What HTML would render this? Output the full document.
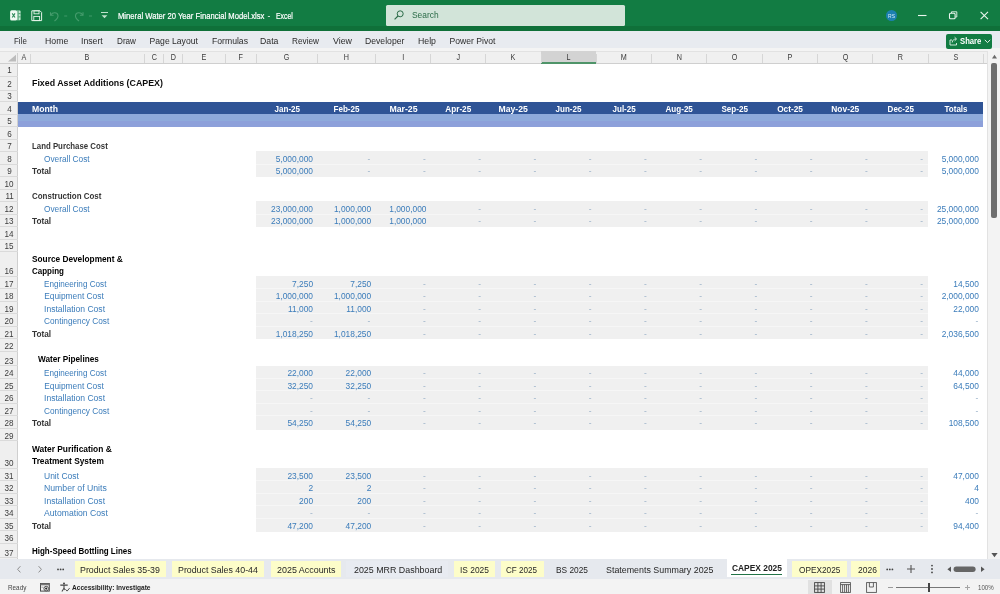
<!DOCTYPE html>
<html lang="en"><head><meta charset="utf-8"><title>Mineral Water 20 Year Financial Model.xlsx - Excel</title>
<style>html,body{margin:0;padding:0;background:#fff}
body{width:1000px;height:594px;overflow:hidden;position:relative;font-family:"Liberation Sans",sans-serif}
#app{position:absolute;left:0;top:0;width:1000px;height:594px;overflow:hidden;will-change:transform}
#app div,#app span,#app svg{position:absolute;display:block}
#app span{white-space:pre}</style></head>
<body><div id="app">
<div style="left:0.00px;top:0.00px;width:1000.00px;height:30.60px;background:#127c43;"></div>
<div style="left:0.00px;top:25.80px;width:1000.00px;height:4.80px;background:#0f7039;"></div>
<div style="left:385.70px;top:5.40px;width:239.20px;height:20.30px;background:#d2e4d9;border-radius:1.5px;"></div>
<span style="left:412.40px;transform-origin:0 50%;top:10.01px;font-size:8.6px;line-height:11.18px;color:#2a6b47;transform:scaleX(0.9762);">Search</span>
<svg style="left:393px;top:8.7px" width="12" height="12" viewBox="0 0 12 12"><circle cx="7.2" cy="4.8" r="3" fill="none" stroke="#2a6b47" stroke-width="1"/><path d="M5 7 L1.6 10.4" stroke="#2a6b47" stroke-width="1.1" fill="none"/></svg>
<span style="left:117.60px;transform-origin:0 50%;top:10.88px;font-size:8.5px;line-height:11.05px;color:#fff;transform:scaleX(0.9000);-webkit-text-stroke:0.2px #fff;">Mineral Water 20 Year Financial Model.xlsx</span>
<span style="left:267.50px;transform-origin:0 50%;top:10.88px;font-size:8.5px;line-height:11.05px;color:#fff;">-</span>
<span style="left:275.60px;transform-origin:0 50%;top:10.88px;font-size:8.5px;line-height:11.05px;color:#fff;transform:scaleX(0.8083);-webkit-text-stroke:0.2px #fff;">Excel</span>
<svg style="left:10px;top:10px" width="11" height="11" viewBox="0 0 11 11"><rect x="6.4" y="0.6" width="4.2" height="9.6" rx="0.8" fill="#c4e8d2"/><rect x="7.6" y="0.6" width="0.9" height="9.6" fill="#2f8d5a"/><rect x="8.5" y="3.3" width="2.1" height="0.8" fill="#2f8d5a"/><rect x="8.5" y="6.5" width="2.1" height="0.8" fill="#2f8d5a"/><rect x="0.1" y="0.3" width="7" height="10.2" rx="1.6" fill="#f0faf3"/><path d="M2.2 3.4 L5 7.5 M5 3.4 L2.2 7.5" stroke="#2b8757" stroke-width="1.1" fill="none"/></svg>
<svg style="left:31px;top:10px" width="12" height="12" viewBox="0 0 12 12"><path d="M0.8 0.8 H9 L10.6 2.4 V10.6 H0.8 Z" fill="none" stroke="#e6f3ea" stroke-width="1"/><rect x="3" y="0.8" width="5" height="3" fill="none" stroke="#e6f3ea" stroke-width="0.9"/><rect x="2.8" y="6.4" width="5.8" height="4.2" fill="none" stroke="#e6f3ea" stroke-width="0.9"/></svg>
<svg style="left:49px;top:9px" width="46" height="14" viewBox="0 0 46 14"><g fill="none" stroke="#469c6d" stroke-width="1.1"><path d="M1.5 3.2 V6.2 H4.6"/><path d="M1.8 6 C3.5 3 8.5 3 9 6.5 C9.3 9 7.5 10.5 5.5 12"/><path d="M15.2 7 H18.2" stroke-width="0.9"/><path d="M34 3.2 V6.2 H30.9"/><path d="M33.7 6 C32 3 27 3 26.5 6.5 C26.2 9 28 10.5 30 12"/><path d="M40 7 H43" stroke-width="0.9"/></g></svg>
<svg style="left:100px;top:11px" width="9" height="9" viewBox="0 0 9 9"><path d="M1 1.5 H8" stroke="#bfe3cd" stroke-width="1"/><path d="M1.6 4.2 L4.5 7.2 L7.4 4.2 Z" fill="#bfe3cd"/></svg>
<div style="left:885.6px;top:9.5px;width:11.8px;height:11.8px;border-radius:50%;background:#1c80b0"></div>
<span style="left:888.03px;transform-origin:50% 50%;top:12.75px;font-size:5px;line-height:6.50px;color:#d8eef8;">RS</span>
<svg style="left:915px;top:9px" width="80" height="14" viewBox="0 0 80 14"><g fill="none" stroke="#eaf6ee" stroke-width="1.1"><path d="M3 6.5 H11.5"/><rect x="34.5" y="4.2" width="5.6" height="5.6" rx="1"/><path d="M36.5 4 V2.8 H41.8 V8 H40.4" stroke-width="0.9"/><path d="M65.6 2.8 L73 10.2 M73 2.8 L65.6 10.2"/></g></svg>
<div style="left:0.00px;top:30.60px;width:1000.00px;height:17.40px;background:#e8ebf0;"></div>
<div style="left:0.00px;top:48.20px;width:1000.00px;height:3.00px;background:#f4f4f4;"></div>
<span style="left:13.60px;transform-origin:0 50%;top:36.01px;font-size:8.6px;line-height:11.18px;color:#2b2b2b;transform:scaleX(0.9237);">File</span>
<span style="left:44.70px;transform-origin:0 50%;top:36.01px;font-size:8.6px;line-height:11.18px;color:#2b2b2b;transform:scaleX(1.0157);">Home</span>
<span style="left:81.10px;transform-origin:0 50%;top:36.01px;font-size:8.6px;line-height:11.18px;color:#2b2b2b;transform:scaleX(1.0136);">Insert</span>
<span style="left:117.00px;transform-origin:0 50%;top:36.01px;font-size:8.6px;line-height:11.18px;color:#2b2b2b;transform:scaleX(0.9468);">Draw</span>
<span style="left:149.60px;transform-origin:0 50%;top:36.01px;font-size:8.6px;line-height:11.18px;color:#2b2b2b;">Page Layout</span>
<span style="left:211.60px;transform-origin:0 50%;top:36.01px;font-size:8.6px;line-height:11.18px;color:#2b2b2b;transform:scaleX(1.0044);">Formulas</span>
<span style="left:260.00px;transform-origin:0 50%;top:36.01px;font-size:8.6px;line-height:11.18px;color:#2b2b2b;transform:scaleX(1.0129);">Data</span>
<span style="left:292.40px;transform-origin:0 50%;top:36.01px;font-size:8.6px;line-height:11.18px;color:#2b2b2b;transform:scaleX(0.9575);">Review</span>
<span style="left:333.00px;transform-origin:0 50%;top:36.01px;font-size:8.6px;line-height:11.18px;color:#2b2b2b;transform:scaleX(1.0279);">View</span>
<span style="left:365.00px;transform-origin:0 50%;top:36.01px;font-size:8.6px;line-height:11.18px;color:#2b2b2b;transform:scaleX(1.0051);">Developer</span>
<span style="left:418.00px;transform-origin:0 50%;top:36.01px;font-size:8.6px;line-height:11.18px;color:#2b2b2b;transform:scaleX(1.0177);">Help</span>
<span style="left:449.60px;transform-origin:0 50%;top:36.01px;font-size:8.6px;line-height:11.18px;color:#2b2b2b;">Power Pivot</span>
<div style="left:946.00px;top:33.60px;width:46.40px;height:15.20px;background:#127c43;border-radius:2px;"></div>
<span style="left:959.80px;transform-origin:0 50%;top:36.01px;font-size:8.6px;line-height:11.18px;color:#fff;font-weight:700;transform:scaleX(0.8953);">Share</span>
<svg style="left:948.5px;top:36px" width="10" height="10" viewBox="0 0 10 10"><g fill="none" stroke="#dff0e5" stroke-width="0.9"><path d="M3 4 H1 V9 H7.5 V7"/><path d="M3.2 6.5 C3.4 4 5 3 7 3 M5.6 1.2 L7.6 3 L5.6 4.9"/></g></svg>
<svg style="left:984px;top:39px" width="7" height="5" viewBox="0 0 7 5"><path d="M0.8 0.8 L3.5 3.6 L6.2 0.8" fill="none" stroke="#dff0e5" stroke-width="1"/></svg>
<div style="left:0.00px;top:51.20px;width:1000.00px;height:508.00px;background:#fff;"></div>
<div style="left:0.00px;top:51.00px;width:987.50px;height:12.50px;background:#f0f0f0;"></div>
<div style="left:0.00px;top:50.70px;width:987.50px;height:0.80px;background:#e2e2e2;"></div>
<div style="left:0.00px;top:62.90px;width:987.50px;height:0.80px;background:#cfcfcf;"></div>
<svg style="left:7px;top:54px" width="10" height="8" viewBox="0 0 10 8"><path d="M9 0.8 V7.6 H1 Z" fill="#bcbcbc"/></svg>
<div style="left:541.04px;top:51.00px;width:55.27px;height:12.50px;background:#d3d3d3;"></div>
<div style="left:541.04px;top:62.00px;width:55.27px;height:1.50px;background:#4f9469;"></div>
<div style="left:29.60px;top:53.50px;width:0.80px;height:9.50px;background:#d6d6d6;"></div>
<span style="left:20.70px;transform-origin:50% 50%;top:52.15px;font-size:9.0px;line-height:11.70px;color:#3a3a3a;transform:scaleX(0.8000);">A</span>
<div style="left:144.00px;top:53.50px;width:0.80px;height:9.50px;background:#d6d6d6;"></div>
<span style="left:84.20px;transform-origin:50% 50%;top:52.15px;font-size:9.0px;line-height:11.70px;color:#3a3a3a;transform:scaleX(0.8000);">B</span>
<div style="left:163.20px;top:53.50px;width:0.80px;height:9.50px;background:#d6d6d6;"></div>
<span style="left:150.75px;transform-origin:50% 50%;top:52.15px;font-size:9.0px;line-height:11.70px;color:#3a3a3a;transform:scaleX(0.8000);">C</span>
<div style="left:181.60px;top:53.50px;width:0.80px;height:9.50px;background:#d6d6d6;"></div>
<span style="left:169.55px;transform-origin:50% 50%;top:52.15px;font-size:9.0px;line-height:11.70px;color:#3a3a3a;transform:scaleX(0.8000);">D</span>
<div style="left:225.20px;top:53.50px;width:0.80px;height:9.50px;background:#d6d6d6;"></div>
<span style="left:200.80px;transform-origin:50% 50%;top:52.15px;font-size:9.0px;line-height:11.70px;color:#3a3a3a;transform:scaleX(0.8000);">E</span>
<div style="left:255.60px;top:53.50px;width:0.80px;height:9.50px;background:#d6d6d6;"></div>
<span style="left:238.05px;transform-origin:50% 50%;top:52.15px;font-size:9.0px;line-height:11.70px;color:#3a3a3a;transform:scaleX(0.8000);">F</span>
<div style="left:317.20px;top:53.50px;width:0.80px;height:9.50px;background:#d6d6d6;"></div>
<span style="left:283.30px;transform-origin:50% 50%;top:52.15px;font-size:9.0px;line-height:11.70px;color:#3a3a3a;transform:scaleX(0.8000);">G</span>
<div style="left:374.80px;top:53.50px;width:0.80px;height:9.50px;background:#d6d6d6;"></div>
<span style="left:343.15px;transform-origin:50% 50%;top:52.15px;font-size:9.0px;line-height:11.70px;color:#3a3a3a;transform:scaleX(0.8000);">H</span>
<div style="left:430.10px;top:53.50px;width:0.80px;height:9.50px;background:#d6d6d6;"></div>
<span style="left:401.60px;transform-origin:50% 50%;top:52.15px;font-size:9.0px;line-height:11.70px;color:#3a3a3a;transform:scaleX(0.8000);">I</span>
<div style="left:485.37px;top:53.50px;width:0.80px;height:9.50px;background:#d6d6d6;"></div>
<span style="left:455.88px;transform-origin:50% 50%;top:52.15px;font-size:9.0px;line-height:11.70px;color:#3a3a3a;transform:scaleX(0.8000);">J</span>
<div style="left:540.64px;top:53.50px;width:0.80px;height:9.50px;background:#d6d6d6;"></div>
<span style="left:510.40px;transform-origin:50% 50%;top:52.15px;font-size:9.0px;line-height:11.70px;color:#3a3a3a;transform:scaleX(0.8000);">K</span>
<div style="left:595.91px;top:53.50px;width:0.80px;height:9.50px;background:#d6d6d6;"></div>
<span style="left:566.17px;transform-origin:50% 50%;top:52.15px;font-size:9.0px;line-height:11.70px;color:#3a3a3a;transform:scaleX(0.8000);">L</span>
<div style="left:651.18px;top:53.50px;width:0.80px;height:9.50px;background:#d6d6d6;"></div>
<span style="left:620.20px;transform-origin:50% 50%;top:52.15px;font-size:9.0px;line-height:11.70px;color:#3a3a3a;transform:scaleX(0.8000);">M</span>
<div style="left:706.45px;top:53.50px;width:0.80px;height:9.50px;background:#d6d6d6;"></div>
<span style="left:675.97px;transform-origin:50% 50%;top:52.15px;font-size:9.0px;line-height:11.70px;color:#3a3a3a;transform:scaleX(0.8000);">N</span>
<div style="left:761.72px;top:53.50px;width:0.80px;height:9.50px;background:#d6d6d6;"></div>
<span style="left:730.98px;transform-origin:50% 50%;top:52.15px;font-size:9.0px;line-height:11.70px;color:#3a3a3a;transform:scaleX(0.8000);">O</span>
<div style="left:816.99px;top:53.50px;width:0.80px;height:9.50px;background:#d6d6d6;"></div>
<span style="left:786.75px;transform-origin:50% 50%;top:52.15px;font-size:9.0px;line-height:11.70px;color:#3a3a3a;transform:scaleX(0.8000);">P</span>
<div style="left:872.26px;top:53.50px;width:0.80px;height:9.50px;background:#d6d6d6;"></div>
<span style="left:841.52px;transform-origin:50% 50%;top:52.15px;font-size:9.0px;line-height:11.70px;color:#3a3a3a;transform:scaleX(0.8000);">Q</span>
<div style="left:927.53px;top:53.50px;width:0.80px;height:9.50px;background:#d6d6d6;"></div>
<span style="left:897.05px;transform-origin:50% 50%;top:52.15px;font-size:9.0px;line-height:11.70px;color:#3a3a3a;transform:scaleX(0.8000);">R</span>
<div style="left:982.80px;top:53.50px;width:0.80px;height:9.50px;background:#d6d6d6;"></div>
<span style="left:952.56px;transform-origin:50% 50%;top:52.15px;font-size:9.0px;line-height:11.70px;color:#3a3a3a;transform:scaleX(0.8000);">S</span>
<div style="left:17.00px;top:52.50px;width:0.80px;height:10.50px;background:#d0d0d0;"></div>
<div style="left:0.00px;top:63.50px;width:17.60px;height:495.50px;background:#efefef;"></div>
<div style="left:17.00px;top:63.50px;width:0.80px;height:495.50px;background:#cfcfcf;"></div>
<div style="left:0.00px;top:75.60px;width:17.80px;height:0.80px;background:#dadada;"></div>
<span style="left:6.70px;transform-origin:50% 50%;top:65.15px;font-size:9.0px;line-height:11.70px;color:#3c3c3c;transform:scaleX(0.9000);">1</span>
<div style="left:0.00px;top:89.60px;width:17.80px;height:0.80px;background:#dadada;"></div>
<span style="left:6.70px;transform-origin:50% 50%;top:78.85px;font-size:9.0px;line-height:11.70px;color:#3c3c3c;transform:scaleX(0.9000);">2</span>
<div style="left:0.00px;top:101.00px;width:17.80px;height:0.80px;background:#dadada;"></div>
<span style="left:6.70px;transform-origin:50% 50%;top:91.05px;font-size:9.0px;line-height:11.70px;color:#3c3c3c;transform:scaleX(0.9000);">3</span>
<div style="left:0.00px;top:113.50px;width:17.80px;height:0.80px;background:#dadada;"></div>
<span style="left:6.70px;transform-origin:50% 50%;top:103.95px;font-size:9.0px;line-height:11.70px;color:#3c3c3c;transform:scaleX(0.9000);">4</span>
<div style="left:0.00px;top:126.00px;width:17.80px;height:0.80px;background:#dadada;"></div>
<span style="left:6.70px;transform-origin:50% 50%;top:116.45px;font-size:9.0px;line-height:11.70px;color:#3c3c3c;transform:scaleX(0.9000);">5</span>
<div style="left:0.00px;top:138.50px;width:17.80px;height:0.80px;background:#dadada;"></div>
<span style="left:6.70px;transform-origin:50% 50%;top:128.95px;font-size:9.0px;line-height:11.70px;color:#3c3c3c;transform:scaleX(0.9000);">6</span>
<div style="left:0.00px;top:151.00px;width:17.80px;height:0.80px;background:#dadada;"></div>
<span style="left:6.70px;transform-origin:50% 50%;top:141.45px;font-size:9.0px;line-height:11.70px;color:#3c3c3c;transform:scaleX(0.9000);">7</span>
<div style="left:0.00px;top:163.50px;width:17.80px;height:0.80px;background:#dadada;"></div>
<span style="left:6.70px;transform-origin:50% 50%;top:153.95px;font-size:9.0px;line-height:11.70px;color:#3c3c3c;transform:scaleX(0.9000);">8</span>
<div style="left:0.00px;top:176.00px;width:17.80px;height:0.80px;background:#dadada;"></div>
<span style="left:6.70px;transform-origin:50% 50%;top:166.45px;font-size:9.0px;line-height:11.70px;color:#3c3c3c;transform:scaleX(0.9000);">9</span>
<div style="left:0.00px;top:188.50px;width:17.80px;height:0.80px;background:#dadada;"></div>
<span style="left:4.19px;transform-origin:50% 50%;top:178.95px;font-size:9.0px;line-height:11.70px;color:#3c3c3c;transform:scaleX(0.9000);">10</span>
<div style="left:0.00px;top:201.00px;width:17.80px;height:0.80px;background:#dadada;"></div>
<span style="left:4.53px;transform-origin:50% 50%;top:191.45px;font-size:9.0px;line-height:11.70px;color:#3c3c3c;transform:scaleX(0.9000);">11</span>
<div style="left:0.00px;top:213.50px;width:17.80px;height:0.80px;background:#dadada;"></div>
<span style="left:4.19px;transform-origin:50% 50%;top:203.95px;font-size:9.0px;line-height:11.70px;color:#3c3c3c;transform:scaleX(0.9000);">12</span>
<div style="left:0.00px;top:226.00px;width:17.80px;height:0.80px;background:#dadada;"></div>
<span style="left:4.19px;transform-origin:50% 50%;top:216.45px;font-size:9.0px;line-height:11.70px;color:#3c3c3c;transform:scaleX(0.9000);">13</span>
<div style="left:0.00px;top:238.50px;width:17.80px;height:0.80px;background:#dadada;"></div>
<span style="left:4.19px;transform-origin:50% 50%;top:228.95px;font-size:9.0px;line-height:11.70px;color:#3c3c3c;transform:scaleX(0.9000);">14</span>
<div style="left:0.00px;top:251.00px;width:17.80px;height:0.80px;background:#dadada;"></div>
<span style="left:4.19px;transform-origin:50% 50%;top:241.45px;font-size:9.0px;line-height:11.70px;color:#3c3c3c;transform:scaleX(0.9000);">15</span>
<div style="left:0.00px;top:275.80px;width:17.80px;height:0.80px;background:#dadada;"></div>
<span style="left:4.19px;transform-origin:50% 50%;top:266.25px;font-size:9.0px;line-height:11.70px;color:#3c3c3c;transform:scaleX(0.9000);">16</span>
<div style="left:0.00px;top:288.30px;width:17.80px;height:0.80px;background:#dadada;"></div>
<span style="left:4.19px;transform-origin:50% 50%;top:278.75px;font-size:9.0px;line-height:11.70px;color:#3c3c3c;transform:scaleX(0.9000);">17</span>
<div style="left:0.00px;top:300.80px;width:17.80px;height:0.80px;background:#dadada;"></div>
<span style="left:4.19px;transform-origin:50% 50%;top:291.25px;font-size:9.0px;line-height:11.70px;color:#3c3c3c;transform:scaleX(0.9000);">18</span>
<div style="left:0.00px;top:313.30px;width:17.80px;height:0.80px;background:#dadada;"></div>
<span style="left:4.19px;transform-origin:50% 50%;top:303.75px;font-size:9.0px;line-height:11.70px;color:#3c3c3c;transform:scaleX(0.9000);">19</span>
<div style="left:0.00px;top:325.80px;width:17.80px;height:0.80px;background:#dadada;"></div>
<span style="left:4.19px;transform-origin:50% 50%;top:316.25px;font-size:9.0px;line-height:11.70px;color:#3c3c3c;transform:scaleX(0.9000);">20</span>
<div style="left:0.00px;top:338.30px;width:17.80px;height:0.80px;background:#dadada;"></div>
<span style="left:4.19px;transform-origin:50% 50%;top:328.75px;font-size:9.0px;line-height:11.70px;color:#3c3c3c;transform:scaleX(0.9000);">21</span>
<div style="left:0.00px;top:350.80px;width:17.80px;height:0.80px;background:#dadada;"></div>
<span style="left:4.19px;transform-origin:50% 50%;top:341.25px;font-size:9.0px;line-height:11.70px;color:#3c3c3c;transform:scaleX(0.9000);">22</span>
<div style="left:0.00px;top:365.10px;width:17.80px;height:0.80px;background:#dadada;"></div>
<span style="left:4.19px;transform-origin:50% 50%;top:355.55px;font-size:9.0px;line-height:11.70px;color:#3c3c3c;transform:scaleX(0.9000);">23</span>
<div style="left:0.00px;top:377.60px;width:17.80px;height:0.80px;background:#dadada;"></div>
<span style="left:4.19px;transform-origin:50% 50%;top:368.05px;font-size:9.0px;line-height:11.70px;color:#3c3c3c;transform:scaleX(0.9000);">24</span>
<div style="left:0.00px;top:390.10px;width:17.80px;height:0.80px;background:#dadada;"></div>
<span style="left:4.19px;transform-origin:50% 50%;top:380.55px;font-size:9.0px;line-height:11.70px;color:#3c3c3c;transform:scaleX(0.9000);">25</span>
<div style="left:0.00px;top:402.60px;width:17.80px;height:0.80px;background:#dadada;"></div>
<span style="left:4.19px;transform-origin:50% 50%;top:393.05px;font-size:9.0px;line-height:11.70px;color:#3c3c3c;transform:scaleX(0.9000);">26</span>
<div style="left:0.00px;top:415.10px;width:17.80px;height:0.80px;background:#dadada;"></div>
<span style="left:4.19px;transform-origin:50% 50%;top:405.55px;font-size:9.0px;line-height:11.70px;color:#3c3c3c;transform:scaleX(0.9000);">27</span>
<div style="left:0.00px;top:427.60px;width:17.80px;height:0.80px;background:#dadada;"></div>
<span style="left:4.19px;transform-origin:50% 50%;top:418.05px;font-size:9.0px;line-height:11.70px;color:#3c3c3c;transform:scaleX(0.9000);">28</span>
<div style="left:0.00px;top:440.10px;width:17.80px;height:0.80px;background:#dadada;"></div>
<span style="left:4.19px;transform-origin:50% 50%;top:430.55px;font-size:9.0px;line-height:11.70px;color:#3c3c3c;transform:scaleX(0.9000);">29</span>
<div style="left:0.00px;top:467.80px;width:17.80px;height:0.80px;background:#dadada;"></div>
<span style="left:4.19px;transform-origin:50% 50%;top:458.25px;font-size:9.0px;line-height:11.70px;color:#3c3c3c;transform:scaleX(0.9000);">30</span>
<div style="left:0.00px;top:480.30px;width:17.80px;height:0.80px;background:#dadada;"></div>
<span style="left:4.19px;transform-origin:50% 50%;top:470.75px;font-size:9.0px;line-height:11.70px;color:#3c3c3c;transform:scaleX(0.9000);">31</span>
<div style="left:0.00px;top:492.80px;width:17.80px;height:0.80px;background:#dadada;"></div>
<span style="left:4.19px;transform-origin:50% 50%;top:483.25px;font-size:9.0px;line-height:11.70px;color:#3c3c3c;transform:scaleX(0.9000);">32</span>
<div style="left:0.00px;top:505.30px;width:17.80px;height:0.80px;background:#dadada;"></div>
<span style="left:4.19px;transform-origin:50% 50%;top:495.75px;font-size:9.0px;line-height:11.70px;color:#3c3c3c;transform:scaleX(0.9000);">33</span>
<div style="left:0.00px;top:517.80px;width:17.80px;height:0.80px;background:#dadada;"></div>
<span style="left:4.19px;transform-origin:50% 50%;top:508.25px;font-size:9.0px;line-height:11.70px;color:#3c3c3c;transform:scaleX(0.9000);">34</span>
<div style="left:0.00px;top:530.30px;width:17.80px;height:0.80px;background:#dadada;"></div>
<span style="left:4.19px;transform-origin:50% 50%;top:520.75px;font-size:9.0px;line-height:11.70px;color:#3c3c3c;transform:scaleX(0.9000);">35</span>
<div style="left:0.00px;top:542.80px;width:17.80px;height:0.80px;background:#dadada;"></div>
<span style="left:4.19px;transform-origin:50% 50%;top:533.25px;font-size:9.0px;line-height:11.70px;color:#3c3c3c;transform:scaleX(0.9000);">36</span>
<div style="left:0.00px;top:557.30px;width:17.80px;height:0.80px;background:#dadada;"></div>
<span style="left:4.19px;transform-origin:50% 50%;top:547.75px;font-size:9.0px;line-height:11.70px;color:#3c3c3c;transform:scaleX(0.9000);">37</span>
<div style="left:17.60px;top:101.50px;width:965.80px;height:12.50px;background:#2f5496;"></div>
<div style="left:17.60px;top:113.90px;width:965.80px;height:12.90px;background:#8da0da;"></div>
<div style="left:17.60px;top:113.90px;width:965.80px;height:7.20px;background:#8eaadb;"></div>
<span style="left:32.00px;transform-origin:0 50%;top:104.04px;font-size:8.4px;line-height:10.92px;color:#fff;font-weight:700;transform:scaleX(1.0322);">Month</span>
<span style="left:273.79px;transform-origin:50% 50%;top:104.04px;font-size:8.4px;line-height:10.92px;color:#fff;font-weight:700;transform:scaleX(0.9619);">Jan-25</span>
<span style="left:333.16px;transform-origin:50% 50%;top:104.04px;font-size:8.4px;line-height:10.92px;color:#fff;font-weight:700;transform:scaleX(0.9640);">Feb-25</span>
<span style="left:389.61px;transform-origin:50% 50%;top:104.04px;font-size:8.4px;line-height:10.92px;color:#fff;font-weight:700;transform:scaleX(1.0451);">Mar-25</span>
<span style="left:445.13px;transform-origin:50% 50%;top:104.04px;font-size:8.4px;line-height:10.92px;color:#fff;font-weight:700;transform:scaleX(0.9772);">Apr-25</span>
<span style="left:499.46px;transform-origin:50% 50%;top:104.04px;font-size:8.4px;line-height:10.92px;color:#fff;font-weight:700;transform:scaleX(1.0322);">May-25</span>
<span style="left:555.44px;transform-origin:50% 50%;top:104.04px;font-size:8.4px;line-height:10.92px;color:#fff;font-weight:700;transform:scaleX(0.9603);">Jun-25</span>
<span style="left:612.11px;transform-origin:50% 50%;top:104.04px;font-size:8.4px;line-height:10.92px;color:#fff;font-weight:700;transform:scaleX(0.9556);">Jul-25</span>
<span style="left:665.28px;transform-origin:50% 50%;top:104.04px;font-size:8.4px;line-height:10.92px;color:#fff;font-weight:700;transform:scaleX(0.9624);">Aug-25</span>
<span style="left:721.01px;transform-origin:50% 50%;top:104.04px;font-size:8.4px;line-height:10.92px;color:#fff;font-weight:700;transform:scaleX(0.9656);">Sep-25</span>
<span style="left:776.98px;transform-origin:50% 50%;top:104.04px;font-size:8.4px;line-height:10.92px;color:#fff;font-weight:700;transform:scaleX(0.9869);">Oct-25</span>
<span style="left:831.32px;transform-origin:50% 50%;top:104.04px;font-size:8.4px;line-height:10.92px;color:#fff;font-weight:700;">Nov-25</span>
<span style="left:886.82px;transform-origin:50% 50%;top:104.04px;font-size:8.4px;line-height:10.92px;color:#fff;font-weight:700;transform:scaleX(0.9546);">Dec-25</span>
<span style="left:943.71px;transform-origin:50% 50%;top:104.04px;font-size:8.4px;line-height:10.92px;color:#fff;font-weight:700;transform:scaleX(0.9538);">Totals</span>
<span style="left:32.00px;transform-origin:0 50%;top:76.96px;font-size:9.6px;line-height:12.48px;color:#0c0c0c;font-weight:700;transform:scaleX(0.9210);">Fixed Asset Additions (CAPEX)</span>
<div style="left:255.90px;top:151.30px;width:672.50px;height:25.30px;background:#f0f0f0;"></div>
<div style="left:255.90px;top:163.50px;width:672.50px;height:0.80px;background:#f6f6f6;"></div>
<div style="left:255.90px;top:201.30px;width:672.50px;height:25.90px;background:#f0f0f0;"></div>
<div style="left:255.90px;top:213.50px;width:672.50px;height:0.80px;background:#f6f6f6;"></div>
<div style="left:255.90px;top:276.10px;width:672.50px;height:63.30px;background:#f0f0f0;"></div>
<div style="left:255.90px;top:288.30px;width:672.50px;height:0.80px;background:#f6f6f6;"></div>
<div style="left:255.90px;top:300.80px;width:672.50px;height:0.80px;background:#f6f6f6;"></div>
<div style="left:255.90px;top:313.30px;width:672.50px;height:0.80px;background:#f6f6f6;"></div>
<div style="left:255.90px;top:325.80px;width:672.50px;height:0.80px;background:#f6f6f6;"></div>
<div style="left:255.90px;top:365.50px;width:672.50px;height:64.40px;background:#f0f0f0;"></div>
<div style="left:255.90px;top:377.60px;width:672.50px;height:0.80px;background:#f6f6f6;"></div>
<div style="left:255.90px;top:390.10px;width:672.50px;height:0.80px;background:#f6f6f6;"></div>
<div style="left:255.90px;top:402.60px;width:672.50px;height:0.80px;background:#f6f6f6;"></div>
<div style="left:255.90px;top:415.10px;width:672.50px;height:0.80px;background:#f6f6f6;"></div>
<div style="left:255.90px;top:468.10px;width:672.50px;height:63.70px;background:#f0f0f0;"></div>
<div style="left:255.90px;top:480.30px;width:672.50px;height:0.80px;background:#f6f6f6;"></div>
<div style="left:255.90px;top:492.80px;width:672.50px;height:0.80px;background:#f6f6f6;"></div>
<div style="left:255.90px;top:505.30px;width:672.50px;height:0.80px;background:#f6f6f6;"></div>
<div style="left:255.90px;top:517.80px;width:672.50px;height:0.80px;background:#f6f6f6;"></div>
<span style="left:32.00px;transform-origin:0 50%;top:141.04px;font-size:8.4px;line-height:10.92px;color:#363636;font-weight:700;transform:scaleX(0.9357);">Land Purchase Cost</span>
<span style="left:44.20px;transform-origin:0 50%;top:153.54px;font-size:8.4px;line-height:10.92px;color:#3b7cba;transform:scaleX(0.9911);">Overall Cost</span>
<span style="left:275.73px;transform-origin:100% 50%;top:153.54px;font-size:8.4px;line-height:10.92px;color:#3b7cba;">5,000,000</span>
<span style="left:367.60px;transform-origin:100% 50%;top:153.54px;font-size:8.4px;line-height:10.92px;color:#9db3c9;">-</span>
<span style="left:422.90px;transform-origin:100% 50%;top:153.54px;font-size:8.4px;line-height:10.92px;color:#9db3c9;">-</span>
<span style="left:478.17px;transform-origin:100% 50%;top:153.54px;font-size:8.4px;line-height:10.92px;color:#9db3c9;">-</span>
<span style="left:533.44px;transform-origin:100% 50%;top:153.54px;font-size:8.4px;line-height:10.92px;color:#9db3c9;">-</span>
<span style="left:588.71px;transform-origin:100% 50%;top:153.54px;font-size:8.4px;line-height:10.92px;color:#9db3c9;">-</span>
<span style="left:643.98px;transform-origin:100% 50%;top:153.54px;font-size:8.4px;line-height:10.92px;color:#9db3c9;">-</span>
<span style="left:699.25px;transform-origin:100% 50%;top:153.54px;font-size:8.4px;line-height:10.92px;color:#9db3c9;">-</span>
<span style="left:754.52px;transform-origin:100% 50%;top:153.54px;font-size:8.4px;line-height:10.92px;color:#9db3c9;">-</span>
<span style="left:809.79px;transform-origin:100% 50%;top:153.54px;font-size:8.4px;line-height:10.92px;color:#9db3c9;">-</span>
<span style="left:865.06px;transform-origin:100% 50%;top:153.54px;font-size:8.4px;line-height:10.92px;color:#9db3c9;">-</span>
<span style="left:920.33px;transform-origin:100% 50%;top:153.54px;font-size:8.4px;line-height:10.92px;color:#9db3c9;">-</span>
<span style="left:941.63px;transform-origin:100% 50%;top:153.54px;font-size:8.4px;line-height:10.92px;color:#3b7cba;">5,000,000</span>
<span style="left:32.00px;transform-origin:0 50%;top:166.04px;font-size:8.4px;line-height:10.92px;color:#363636;font-weight:700;transform:scaleX(0.9876);">Total</span>
<span style="left:275.73px;transform-origin:100% 50%;top:166.04px;font-size:8.4px;line-height:10.92px;color:#3b7cba;">5,000,000</span>
<span style="left:367.60px;transform-origin:100% 50%;top:166.04px;font-size:8.4px;line-height:10.92px;color:#9db3c9;">-</span>
<span style="left:422.90px;transform-origin:100% 50%;top:166.04px;font-size:8.4px;line-height:10.92px;color:#9db3c9;">-</span>
<span style="left:478.17px;transform-origin:100% 50%;top:166.04px;font-size:8.4px;line-height:10.92px;color:#9db3c9;">-</span>
<span style="left:533.44px;transform-origin:100% 50%;top:166.04px;font-size:8.4px;line-height:10.92px;color:#9db3c9;">-</span>
<span style="left:588.71px;transform-origin:100% 50%;top:166.04px;font-size:8.4px;line-height:10.92px;color:#9db3c9;">-</span>
<span style="left:643.98px;transform-origin:100% 50%;top:166.04px;font-size:8.4px;line-height:10.92px;color:#9db3c9;">-</span>
<span style="left:699.25px;transform-origin:100% 50%;top:166.04px;font-size:8.4px;line-height:10.92px;color:#9db3c9;">-</span>
<span style="left:754.52px;transform-origin:100% 50%;top:166.04px;font-size:8.4px;line-height:10.92px;color:#9db3c9;">-</span>
<span style="left:809.79px;transform-origin:100% 50%;top:166.04px;font-size:8.4px;line-height:10.92px;color:#9db3c9;">-</span>
<span style="left:865.06px;transform-origin:100% 50%;top:166.04px;font-size:8.4px;line-height:10.92px;color:#9db3c9;">-</span>
<span style="left:920.33px;transform-origin:100% 50%;top:166.04px;font-size:8.4px;line-height:10.92px;color:#9db3c9;">-</span>
<span style="left:941.63px;transform-origin:100% 50%;top:166.04px;font-size:8.4px;line-height:10.92px;color:#3b7cba;">5,000,000</span>
<span style="left:32.00px;transform-origin:0 50%;top:191.04px;font-size:8.4px;line-height:10.92px;color:#363636;font-weight:700;transform:scaleX(0.9500);">Construction Cost</span>
<span style="left:44.20px;transform-origin:0 50%;top:203.54px;font-size:8.4px;line-height:10.92px;color:#3b7cba;transform:scaleX(0.9911);">Overall Cost</span>
<span style="left:271.06px;transform-origin:100% 50%;top:203.54px;font-size:8.4px;line-height:10.92px;color:#3b7cba;">23,000,000</span>
<span style="left:333.93px;transform-origin:100% 50%;top:203.54px;font-size:8.4px;line-height:10.92px;color:#3b7cba;">1,000,000</span>
<span style="left:389.23px;transform-origin:100% 50%;top:203.54px;font-size:8.4px;line-height:10.92px;color:#3b7cba;">1,000,000</span>
<span style="left:478.17px;transform-origin:100% 50%;top:203.54px;font-size:8.4px;line-height:10.92px;color:#9db3c9;">-</span>
<span style="left:533.44px;transform-origin:100% 50%;top:203.54px;font-size:8.4px;line-height:10.92px;color:#9db3c9;">-</span>
<span style="left:588.71px;transform-origin:100% 50%;top:203.54px;font-size:8.4px;line-height:10.92px;color:#9db3c9;">-</span>
<span style="left:643.98px;transform-origin:100% 50%;top:203.54px;font-size:8.4px;line-height:10.92px;color:#9db3c9;">-</span>
<span style="left:699.25px;transform-origin:100% 50%;top:203.54px;font-size:8.4px;line-height:10.92px;color:#9db3c9;">-</span>
<span style="left:754.52px;transform-origin:100% 50%;top:203.54px;font-size:8.4px;line-height:10.92px;color:#9db3c9;">-</span>
<span style="left:809.79px;transform-origin:100% 50%;top:203.54px;font-size:8.4px;line-height:10.92px;color:#9db3c9;">-</span>
<span style="left:865.06px;transform-origin:100% 50%;top:203.54px;font-size:8.4px;line-height:10.92px;color:#9db3c9;">-</span>
<span style="left:920.33px;transform-origin:100% 50%;top:203.54px;font-size:8.4px;line-height:10.92px;color:#9db3c9;">-</span>
<span style="left:936.96px;transform-origin:100% 50%;top:203.54px;font-size:8.4px;line-height:10.92px;color:#3b7cba;">25,000,000</span>
<span style="left:32.00px;transform-origin:0 50%;top:216.04px;font-size:8.4px;line-height:10.92px;color:#363636;font-weight:700;transform:scaleX(0.9876);">Total</span>
<span style="left:271.06px;transform-origin:100% 50%;top:216.04px;font-size:8.4px;line-height:10.92px;color:#3b7cba;">23,000,000</span>
<span style="left:333.93px;transform-origin:100% 50%;top:216.04px;font-size:8.4px;line-height:10.92px;color:#3b7cba;">1,000,000</span>
<span style="left:389.23px;transform-origin:100% 50%;top:216.04px;font-size:8.4px;line-height:10.92px;color:#3b7cba;">1,000,000</span>
<span style="left:478.17px;transform-origin:100% 50%;top:216.04px;font-size:8.4px;line-height:10.92px;color:#9db3c9;">-</span>
<span style="left:533.44px;transform-origin:100% 50%;top:216.04px;font-size:8.4px;line-height:10.92px;color:#9db3c9;">-</span>
<span style="left:588.71px;transform-origin:100% 50%;top:216.04px;font-size:8.4px;line-height:10.92px;color:#9db3c9;">-</span>
<span style="left:643.98px;transform-origin:100% 50%;top:216.04px;font-size:8.4px;line-height:10.92px;color:#9db3c9;">-</span>
<span style="left:699.25px;transform-origin:100% 50%;top:216.04px;font-size:8.4px;line-height:10.92px;color:#9db3c9;">-</span>
<span style="left:754.52px;transform-origin:100% 50%;top:216.04px;font-size:8.4px;line-height:10.92px;color:#9db3c9;">-</span>
<span style="left:809.79px;transform-origin:100% 50%;top:216.04px;font-size:8.4px;line-height:10.92px;color:#9db3c9;">-</span>
<span style="left:865.06px;transform-origin:100% 50%;top:216.04px;font-size:8.4px;line-height:10.92px;color:#9db3c9;">-</span>
<span style="left:920.33px;transform-origin:100% 50%;top:216.04px;font-size:8.4px;line-height:10.92px;color:#9db3c9;">-</span>
<span style="left:936.96px;transform-origin:100% 50%;top:216.04px;font-size:8.4px;line-height:10.92px;color:#3b7cba;">25,000,000</span>
<span style="left:44.20px;transform-origin:0 50%;top:278.74px;font-size:8.4px;line-height:10.92px;color:#3b7cba;transform:scaleX(0.9714);">Engineering Cost</span>
<span style="left:292.08px;transform-origin:100% 50%;top:278.74px;font-size:8.4px;line-height:10.92px;color:#3b7cba;">7,250</span>
<span style="left:350.28px;transform-origin:100% 50%;top:278.74px;font-size:8.4px;line-height:10.92px;color:#3b7cba;">7,250</span>
<span style="left:422.90px;transform-origin:100% 50%;top:278.74px;font-size:8.4px;line-height:10.92px;color:#9db3c9;">-</span>
<span style="left:478.17px;transform-origin:100% 50%;top:278.74px;font-size:8.4px;line-height:10.92px;color:#9db3c9;">-</span>
<span style="left:533.44px;transform-origin:100% 50%;top:278.74px;font-size:8.4px;line-height:10.92px;color:#9db3c9;">-</span>
<span style="left:588.71px;transform-origin:100% 50%;top:278.74px;font-size:8.4px;line-height:10.92px;color:#9db3c9;">-</span>
<span style="left:643.98px;transform-origin:100% 50%;top:278.74px;font-size:8.4px;line-height:10.92px;color:#9db3c9;">-</span>
<span style="left:699.25px;transform-origin:100% 50%;top:278.74px;font-size:8.4px;line-height:10.92px;color:#9db3c9;">-</span>
<span style="left:754.52px;transform-origin:100% 50%;top:278.74px;font-size:8.4px;line-height:10.92px;color:#9db3c9;">-</span>
<span style="left:809.79px;transform-origin:100% 50%;top:278.74px;font-size:8.4px;line-height:10.92px;color:#9db3c9;">-</span>
<span style="left:865.06px;transform-origin:100% 50%;top:278.74px;font-size:8.4px;line-height:10.92px;color:#9db3c9;">-</span>
<span style="left:920.33px;transform-origin:100% 50%;top:278.74px;font-size:8.4px;line-height:10.92px;color:#9db3c9;">-</span>
<span style="left:953.31px;transform-origin:100% 50%;top:278.74px;font-size:8.4px;line-height:10.92px;color:#3b7cba;">14,500</span>
<span style="left:44.20px;transform-origin:0 50%;top:291.24px;font-size:8.4px;line-height:10.92px;color:#3b7cba;">Equipment Cost</span>
<span style="left:275.73px;transform-origin:100% 50%;top:291.24px;font-size:8.4px;line-height:10.92px;color:#3b7cba;">1,000,000</span>
<span style="left:333.93px;transform-origin:100% 50%;top:291.24px;font-size:8.4px;line-height:10.92px;color:#3b7cba;">1,000,000</span>
<span style="left:422.90px;transform-origin:100% 50%;top:291.24px;font-size:8.4px;line-height:10.92px;color:#9db3c9;">-</span>
<span style="left:478.17px;transform-origin:100% 50%;top:291.24px;font-size:8.4px;line-height:10.92px;color:#9db3c9;">-</span>
<span style="left:533.44px;transform-origin:100% 50%;top:291.24px;font-size:8.4px;line-height:10.92px;color:#9db3c9;">-</span>
<span style="left:588.71px;transform-origin:100% 50%;top:291.24px;font-size:8.4px;line-height:10.92px;color:#9db3c9;">-</span>
<span style="left:643.98px;transform-origin:100% 50%;top:291.24px;font-size:8.4px;line-height:10.92px;color:#9db3c9;">-</span>
<span style="left:699.25px;transform-origin:100% 50%;top:291.24px;font-size:8.4px;line-height:10.92px;color:#9db3c9;">-</span>
<span style="left:754.52px;transform-origin:100% 50%;top:291.24px;font-size:8.4px;line-height:10.92px;color:#9db3c9;">-</span>
<span style="left:809.79px;transform-origin:100% 50%;top:291.24px;font-size:8.4px;line-height:10.92px;color:#9db3c9;">-</span>
<span style="left:865.06px;transform-origin:100% 50%;top:291.24px;font-size:8.4px;line-height:10.92px;color:#9db3c9;">-</span>
<span style="left:920.33px;transform-origin:100% 50%;top:291.24px;font-size:8.4px;line-height:10.92px;color:#9db3c9;">-</span>
<span style="left:941.63px;transform-origin:100% 50%;top:291.24px;font-size:8.4px;line-height:10.92px;color:#3b7cba;">2,000,000</span>
<span style="left:44.20px;transform-origin:0 50%;top:303.74px;font-size:8.4px;line-height:10.92px;color:#3b7cba;transform:scaleX(1.0240);">Installation Cost</span>
<span style="left:288.03px;transform-origin:100% 50%;top:303.74px;font-size:8.4px;line-height:10.92px;color:#3b7cba;">11,000</span>
<span style="left:346.23px;transform-origin:100% 50%;top:303.74px;font-size:8.4px;line-height:10.92px;color:#3b7cba;">11,000</span>
<span style="left:422.90px;transform-origin:100% 50%;top:303.74px;font-size:8.4px;line-height:10.92px;color:#9db3c9;">-</span>
<span style="left:478.17px;transform-origin:100% 50%;top:303.74px;font-size:8.4px;line-height:10.92px;color:#9db3c9;">-</span>
<span style="left:533.44px;transform-origin:100% 50%;top:303.74px;font-size:8.4px;line-height:10.92px;color:#9db3c9;">-</span>
<span style="left:588.71px;transform-origin:100% 50%;top:303.74px;font-size:8.4px;line-height:10.92px;color:#9db3c9;">-</span>
<span style="left:643.98px;transform-origin:100% 50%;top:303.74px;font-size:8.4px;line-height:10.92px;color:#9db3c9;">-</span>
<span style="left:699.25px;transform-origin:100% 50%;top:303.74px;font-size:8.4px;line-height:10.92px;color:#9db3c9;">-</span>
<span style="left:754.52px;transform-origin:100% 50%;top:303.74px;font-size:8.4px;line-height:10.92px;color:#9db3c9;">-</span>
<span style="left:809.79px;transform-origin:100% 50%;top:303.74px;font-size:8.4px;line-height:10.92px;color:#9db3c9;">-</span>
<span style="left:865.06px;transform-origin:100% 50%;top:303.74px;font-size:8.4px;line-height:10.92px;color:#9db3c9;">-</span>
<span style="left:920.33px;transform-origin:100% 50%;top:303.74px;font-size:8.4px;line-height:10.92px;color:#9db3c9;">-</span>
<span style="left:953.31px;transform-origin:100% 50%;top:303.74px;font-size:8.4px;line-height:10.92px;color:#3b7cba;">22,000</span>
<span style="left:44.20px;transform-origin:0 50%;top:316.24px;font-size:8.4px;line-height:10.92px;color:#3b7cba;transform:scaleX(0.9864);">Contingency Cost</span>
<span style="left:310.00px;transform-origin:100% 50%;top:316.24px;font-size:8.4px;line-height:10.92px;color:#9db3c9;">-</span>
<span style="left:367.60px;transform-origin:100% 50%;top:316.24px;font-size:8.4px;line-height:10.92px;color:#9db3c9;">-</span>
<span style="left:422.90px;transform-origin:100% 50%;top:316.24px;font-size:8.4px;line-height:10.92px;color:#9db3c9;">-</span>
<span style="left:478.17px;transform-origin:100% 50%;top:316.24px;font-size:8.4px;line-height:10.92px;color:#9db3c9;">-</span>
<span style="left:533.44px;transform-origin:100% 50%;top:316.24px;font-size:8.4px;line-height:10.92px;color:#9db3c9;">-</span>
<span style="left:588.71px;transform-origin:100% 50%;top:316.24px;font-size:8.4px;line-height:10.92px;color:#9db3c9;">-</span>
<span style="left:643.98px;transform-origin:100% 50%;top:316.24px;font-size:8.4px;line-height:10.92px;color:#9db3c9;">-</span>
<span style="left:699.25px;transform-origin:100% 50%;top:316.24px;font-size:8.4px;line-height:10.92px;color:#9db3c9;">-</span>
<span style="left:754.52px;transform-origin:100% 50%;top:316.24px;font-size:8.4px;line-height:10.92px;color:#9db3c9;">-</span>
<span style="left:809.79px;transform-origin:100% 50%;top:316.24px;font-size:8.4px;line-height:10.92px;color:#9db3c9;">-</span>
<span style="left:865.06px;transform-origin:100% 50%;top:316.24px;font-size:8.4px;line-height:10.92px;color:#9db3c9;">-</span>
<span style="left:920.33px;transform-origin:100% 50%;top:316.24px;font-size:8.4px;line-height:10.92px;color:#9db3c9;">-</span>
<span style="left:975.60px;transform-origin:100% 50%;top:316.24px;font-size:8.4px;line-height:10.92px;color:#9db3c9;">-</span>
<span style="left:32.00px;transform-origin:0 50%;top:328.74px;font-size:8.4px;line-height:10.92px;color:#363636;font-weight:700;transform:scaleX(0.9876);">Total</span>
<span style="left:275.73px;transform-origin:100% 50%;top:328.74px;font-size:8.4px;line-height:10.92px;color:#3b7cba;">1,018,250</span>
<span style="left:333.93px;transform-origin:100% 50%;top:328.74px;font-size:8.4px;line-height:10.92px;color:#3b7cba;">1,018,250</span>
<span style="left:422.90px;transform-origin:100% 50%;top:328.74px;font-size:8.4px;line-height:10.92px;color:#9db3c9;">-</span>
<span style="left:478.17px;transform-origin:100% 50%;top:328.74px;font-size:8.4px;line-height:10.92px;color:#9db3c9;">-</span>
<span style="left:533.44px;transform-origin:100% 50%;top:328.74px;font-size:8.4px;line-height:10.92px;color:#9db3c9;">-</span>
<span style="left:588.71px;transform-origin:100% 50%;top:328.74px;font-size:8.4px;line-height:10.92px;color:#9db3c9;">-</span>
<span style="left:643.98px;transform-origin:100% 50%;top:328.74px;font-size:8.4px;line-height:10.92px;color:#9db3c9;">-</span>
<span style="left:699.25px;transform-origin:100% 50%;top:328.74px;font-size:8.4px;line-height:10.92px;color:#9db3c9;">-</span>
<span style="left:754.52px;transform-origin:100% 50%;top:328.74px;font-size:8.4px;line-height:10.92px;color:#9db3c9;">-</span>
<span style="left:809.79px;transform-origin:100% 50%;top:328.74px;font-size:8.4px;line-height:10.92px;color:#9db3c9;">-</span>
<span style="left:865.06px;transform-origin:100% 50%;top:328.74px;font-size:8.4px;line-height:10.92px;color:#9db3c9;">-</span>
<span style="left:920.33px;transform-origin:100% 50%;top:328.74px;font-size:8.4px;line-height:10.92px;color:#9db3c9;">-</span>
<span style="left:941.63px;transform-origin:100% 50%;top:328.74px;font-size:8.4px;line-height:10.92px;color:#3b7cba;">2,036,500</span>
<span style="left:44.20px;transform-origin:0 50%;top:368.04px;font-size:8.4px;line-height:10.92px;color:#3b7cba;transform:scaleX(0.9714);">Engineering Cost</span>
<span style="left:287.41px;transform-origin:100% 50%;top:368.04px;font-size:8.4px;line-height:10.92px;color:#3b7cba;">22,000</span>
<span style="left:345.61px;transform-origin:100% 50%;top:368.04px;font-size:8.4px;line-height:10.92px;color:#3b7cba;">22,000</span>
<span style="left:422.90px;transform-origin:100% 50%;top:368.04px;font-size:8.4px;line-height:10.92px;color:#9db3c9;">-</span>
<span style="left:478.17px;transform-origin:100% 50%;top:368.04px;font-size:8.4px;line-height:10.92px;color:#9db3c9;">-</span>
<span style="left:533.44px;transform-origin:100% 50%;top:368.04px;font-size:8.4px;line-height:10.92px;color:#9db3c9;">-</span>
<span style="left:588.71px;transform-origin:100% 50%;top:368.04px;font-size:8.4px;line-height:10.92px;color:#9db3c9;">-</span>
<span style="left:643.98px;transform-origin:100% 50%;top:368.04px;font-size:8.4px;line-height:10.92px;color:#9db3c9;">-</span>
<span style="left:699.25px;transform-origin:100% 50%;top:368.04px;font-size:8.4px;line-height:10.92px;color:#9db3c9;">-</span>
<span style="left:754.52px;transform-origin:100% 50%;top:368.04px;font-size:8.4px;line-height:10.92px;color:#9db3c9;">-</span>
<span style="left:809.79px;transform-origin:100% 50%;top:368.04px;font-size:8.4px;line-height:10.92px;color:#9db3c9;">-</span>
<span style="left:865.06px;transform-origin:100% 50%;top:368.04px;font-size:8.4px;line-height:10.92px;color:#9db3c9;">-</span>
<span style="left:920.33px;transform-origin:100% 50%;top:368.04px;font-size:8.4px;line-height:10.92px;color:#9db3c9;">-</span>
<span style="left:953.31px;transform-origin:100% 50%;top:368.04px;font-size:8.4px;line-height:10.92px;color:#3b7cba;">44,000</span>
<span style="left:44.20px;transform-origin:0 50%;top:380.54px;font-size:8.4px;line-height:10.92px;color:#3b7cba;">Equipment Cost</span>
<span style="left:287.41px;transform-origin:100% 50%;top:380.54px;font-size:8.4px;line-height:10.92px;color:#3b7cba;">32,250</span>
<span style="left:345.61px;transform-origin:100% 50%;top:380.54px;font-size:8.4px;line-height:10.92px;color:#3b7cba;">32,250</span>
<span style="left:422.90px;transform-origin:100% 50%;top:380.54px;font-size:8.4px;line-height:10.92px;color:#9db3c9;">-</span>
<span style="left:478.17px;transform-origin:100% 50%;top:380.54px;font-size:8.4px;line-height:10.92px;color:#9db3c9;">-</span>
<span style="left:533.44px;transform-origin:100% 50%;top:380.54px;font-size:8.4px;line-height:10.92px;color:#9db3c9;">-</span>
<span style="left:588.71px;transform-origin:100% 50%;top:380.54px;font-size:8.4px;line-height:10.92px;color:#9db3c9;">-</span>
<span style="left:643.98px;transform-origin:100% 50%;top:380.54px;font-size:8.4px;line-height:10.92px;color:#9db3c9;">-</span>
<span style="left:699.25px;transform-origin:100% 50%;top:380.54px;font-size:8.4px;line-height:10.92px;color:#9db3c9;">-</span>
<span style="left:754.52px;transform-origin:100% 50%;top:380.54px;font-size:8.4px;line-height:10.92px;color:#9db3c9;">-</span>
<span style="left:809.79px;transform-origin:100% 50%;top:380.54px;font-size:8.4px;line-height:10.92px;color:#9db3c9;">-</span>
<span style="left:865.06px;transform-origin:100% 50%;top:380.54px;font-size:8.4px;line-height:10.92px;color:#9db3c9;">-</span>
<span style="left:920.33px;transform-origin:100% 50%;top:380.54px;font-size:8.4px;line-height:10.92px;color:#9db3c9;">-</span>
<span style="left:953.31px;transform-origin:100% 50%;top:380.54px;font-size:8.4px;line-height:10.92px;color:#3b7cba;">64,500</span>
<span style="left:44.20px;transform-origin:0 50%;top:393.04px;font-size:8.4px;line-height:10.92px;color:#3b7cba;transform:scaleX(1.0240);">Installation Cost</span>
<span style="left:310.00px;transform-origin:100% 50%;top:393.04px;font-size:8.4px;line-height:10.92px;color:#9db3c9;">-</span>
<span style="left:367.60px;transform-origin:100% 50%;top:393.04px;font-size:8.4px;line-height:10.92px;color:#9db3c9;">-</span>
<span style="left:422.90px;transform-origin:100% 50%;top:393.04px;font-size:8.4px;line-height:10.92px;color:#9db3c9;">-</span>
<span style="left:478.17px;transform-origin:100% 50%;top:393.04px;font-size:8.4px;line-height:10.92px;color:#9db3c9;">-</span>
<span style="left:533.44px;transform-origin:100% 50%;top:393.04px;font-size:8.4px;line-height:10.92px;color:#9db3c9;">-</span>
<span style="left:588.71px;transform-origin:100% 50%;top:393.04px;font-size:8.4px;line-height:10.92px;color:#9db3c9;">-</span>
<span style="left:643.98px;transform-origin:100% 50%;top:393.04px;font-size:8.4px;line-height:10.92px;color:#9db3c9;">-</span>
<span style="left:699.25px;transform-origin:100% 50%;top:393.04px;font-size:8.4px;line-height:10.92px;color:#9db3c9;">-</span>
<span style="left:754.52px;transform-origin:100% 50%;top:393.04px;font-size:8.4px;line-height:10.92px;color:#9db3c9;">-</span>
<span style="left:809.79px;transform-origin:100% 50%;top:393.04px;font-size:8.4px;line-height:10.92px;color:#9db3c9;">-</span>
<span style="left:865.06px;transform-origin:100% 50%;top:393.04px;font-size:8.4px;line-height:10.92px;color:#9db3c9;">-</span>
<span style="left:920.33px;transform-origin:100% 50%;top:393.04px;font-size:8.4px;line-height:10.92px;color:#9db3c9;">-</span>
<span style="left:975.60px;transform-origin:100% 50%;top:393.04px;font-size:8.4px;line-height:10.92px;color:#9db3c9;">-</span>
<span style="left:44.20px;transform-origin:0 50%;top:405.54px;font-size:8.4px;line-height:10.92px;color:#3b7cba;transform:scaleX(0.9864);">Contingency Cost</span>
<span style="left:310.00px;transform-origin:100% 50%;top:405.54px;font-size:8.4px;line-height:10.92px;color:#9db3c9;">-</span>
<span style="left:367.60px;transform-origin:100% 50%;top:405.54px;font-size:8.4px;line-height:10.92px;color:#9db3c9;">-</span>
<span style="left:422.90px;transform-origin:100% 50%;top:405.54px;font-size:8.4px;line-height:10.92px;color:#9db3c9;">-</span>
<span style="left:478.17px;transform-origin:100% 50%;top:405.54px;font-size:8.4px;line-height:10.92px;color:#9db3c9;">-</span>
<span style="left:533.44px;transform-origin:100% 50%;top:405.54px;font-size:8.4px;line-height:10.92px;color:#9db3c9;">-</span>
<span style="left:588.71px;transform-origin:100% 50%;top:405.54px;font-size:8.4px;line-height:10.92px;color:#9db3c9;">-</span>
<span style="left:643.98px;transform-origin:100% 50%;top:405.54px;font-size:8.4px;line-height:10.92px;color:#9db3c9;">-</span>
<span style="left:699.25px;transform-origin:100% 50%;top:405.54px;font-size:8.4px;line-height:10.92px;color:#9db3c9;">-</span>
<span style="left:754.52px;transform-origin:100% 50%;top:405.54px;font-size:8.4px;line-height:10.92px;color:#9db3c9;">-</span>
<span style="left:809.79px;transform-origin:100% 50%;top:405.54px;font-size:8.4px;line-height:10.92px;color:#9db3c9;">-</span>
<span style="left:865.06px;transform-origin:100% 50%;top:405.54px;font-size:8.4px;line-height:10.92px;color:#9db3c9;">-</span>
<span style="left:920.33px;transform-origin:100% 50%;top:405.54px;font-size:8.4px;line-height:10.92px;color:#9db3c9;">-</span>
<span style="left:975.60px;transform-origin:100% 50%;top:405.54px;font-size:8.4px;line-height:10.92px;color:#9db3c9;">-</span>
<span style="left:32.00px;transform-origin:0 50%;top:418.04px;font-size:8.4px;line-height:10.92px;color:#363636;font-weight:700;transform:scaleX(0.9876);">Total</span>
<span style="left:287.41px;transform-origin:100% 50%;top:418.04px;font-size:8.4px;line-height:10.92px;color:#3b7cba;">54,250</span>
<span style="left:345.61px;transform-origin:100% 50%;top:418.04px;font-size:8.4px;line-height:10.92px;color:#3b7cba;">54,250</span>
<span style="left:422.90px;transform-origin:100% 50%;top:418.04px;font-size:8.4px;line-height:10.92px;color:#9db3c9;">-</span>
<span style="left:478.17px;transform-origin:100% 50%;top:418.04px;font-size:8.4px;line-height:10.92px;color:#9db3c9;">-</span>
<span style="left:533.44px;transform-origin:100% 50%;top:418.04px;font-size:8.4px;line-height:10.92px;color:#9db3c9;">-</span>
<span style="left:588.71px;transform-origin:100% 50%;top:418.04px;font-size:8.4px;line-height:10.92px;color:#9db3c9;">-</span>
<span style="left:643.98px;transform-origin:100% 50%;top:418.04px;font-size:8.4px;line-height:10.92px;color:#9db3c9;">-</span>
<span style="left:699.25px;transform-origin:100% 50%;top:418.04px;font-size:8.4px;line-height:10.92px;color:#9db3c9;">-</span>
<span style="left:754.52px;transform-origin:100% 50%;top:418.04px;font-size:8.4px;line-height:10.92px;color:#9db3c9;">-</span>
<span style="left:809.79px;transform-origin:100% 50%;top:418.04px;font-size:8.4px;line-height:10.92px;color:#9db3c9;">-</span>
<span style="left:865.06px;transform-origin:100% 50%;top:418.04px;font-size:8.4px;line-height:10.92px;color:#9db3c9;">-</span>
<span style="left:920.33px;transform-origin:100% 50%;top:418.04px;font-size:8.4px;line-height:10.92px;color:#9db3c9;">-</span>
<span style="left:948.64px;transform-origin:100% 50%;top:418.04px;font-size:8.4px;line-height:10.92px;color:#3b7cba;">108,500</span>
<span style="left:44.20px;transform-origin:0 50%;top:470.74px;font-size:8.4px;line-height:10.92px;color:#3b7cba;transform:scaleX(1.0132);">Unit Cost</span>
<span style="left:287.41px;transform-origin:100% 50%;top:470.74px;font-size:8.4px;line-height:10.92px;color:#3b7cba;">23,500</span>
<span style="left:345.61px;transform-origin:100% 50%;top:470.74px;font-size:8.4px;line-height:10.92px;color:#3b7cba;">23,500</span>
<span style="left:422.90px;transform-origin:100% 50%;top:470.74px;font-size:8.4px;line-height:10.92px;color:#9db3c9;">-</span>
<span style="left:478.17px;transform-origin:100% 50%;top:470.74px;font-size:8.4px;line-height:10.92px;color:#9db3c9;">-</span>
<span style="left:533.44px;transform-origin:100% 50%;top:470.74px;font-size:8.4px;line-height:10.92px;color:#9db3c9;">-</span>
<span style="left:588.71px;transform-origin:100% 50%;top:470.74px;font-size:8.4px;line-height:10.92px;color:#9db3c9;">-</span>
<span style="left:643.98px;transform-origin:100% 50%;top:470.74px;font-size:8.4px;line-height:10.92px;color:#9db3c9;">-</span>
<span style="left:699.25px;transform-origin:100% 50%;top:470.74px;font-size:8.4px;line-height:10.92px;color:#9db3c9;">-</span>
<span style="left:754.52px;transform-origin:100% 50%;top:470.74px;font-size:8.4px;line-height:10.92px;color:#9db3c9;">-</span>
<span style="left:809.79px;transform-origin:100% 50%;top:470.74px;font-size:8.4px;line-height:10.92px;color:#9db3c9;">-</span>
<span style="left:865.06px;transform-origin:100% 50%;top:470.74px;font-size:8.4px;line-height:10.92px;color:#9db3c9;">-</span>
<span style="left:920.33px;transform-origin:100% 50%;top:470.74px;font-size:8.4px;line-height:10.92px;color:#9db3c9;">-</span>
<span style="left:953.31px;transform-origin:100% 50%;top:470.74px;font-size:8.4px;line-height:10.92px;color:#3b7cba;">47,000</span>
<span style="left:44.20px;transform-origin:0 50%;top:483.24px;font-size:8.4px;line-height:10.92px;color:#3b7cba;transform:scaleX(1.0381);">Number of Units</span>
<span style="left:308.43px;transform-origin:100% 50%;top:483.24px;font-size:8.4px;line-height:10.92px;color:#3b7cba;">2</span>
<span style="left:366.63px;transform-origin:100% 50%;top:483.24px;font-size:8.4px;line-height:10.92px;color:#3b7cba;">2</span>
<span style="left:422.90px;transform-origin:100% 50%;top:483.24px;font-size:8.4px;line-height:10.92px;color:#9db3c9;">-</span>
<span style="left:478.17px;transform-origin:100% 50%;top:483.24px;font-size:8.4px;line-height:10.92px;color:#9db3c9;">-</span>
<span style="left:533.44px;transform-origin:100% 50%;top:483.24px;font-size:8.4px;line-height:10.92px;color:#9db3c9;">-</span>
<span style="left:588.71px;transform-origin:100% 50%;top:483.24px;font-size:8.4px;line-height:10.92px;color:#9db3c9;">-</span>
<span style="left:643.98px;transform-origin:100% 50%;top:483.24px;font-size:8.4px;line-height:10.92px;color:#9db3c9;">-</span>
<span style="left:699.25px;transform-origin:100% 50%;top:483.24px;font-size:8.4px;line-height:10.92px;color:#9db3c9;">-</span>
<span style="left:754.52px;transform-origin:100% 50%;top:483.24px;font-size:8.4px;line-height:10.92px;color:#9db3c9;">-</span>
<span style="left:809.79px;transform-origin:100% 50%;top:483.24px;font-size:8.4px;line-height:10.92px;color:#9db3c9;">-</span>
<span style="left:865.06px;transform-origin:100% 50%;top:483.24px;font-size:8.4px;line-height:10.92px;color:#9db3c9;">-</span>
<span style="left:920.33px;transform-origin:100% 50%;top:483.24px;font-size:8.4px;line-height:10.92px;color:#9db3c9;">-</span>
<span style="left:974.33px;transform-origin:100% 50%;top:483.24px;font-size:8.4px;line-height:10.92px;color:#3b7cba;">4</span>
<span style="left:44.20px;transform-origin:0 50%;top:495.74px;font-size:8.4px;line-height:10.92px;color:#3b7cba;transform:scaleX(1.0240);">Installation Cost</span>
<span style="left:299.08px;transform-origin:100% 50%;top:495.74px;font-size:8.4px;line-height:10.92px;color:#3b7cba;">200</span>
<span style="left:357.28px;transform-origin:100% 50%;top:495.74px;font-size:8.4px;line-height:10.92px;color:#3b7cba;">200</span>
<span style="left:422.90px;transform-origin:100% 50%;top:495.74px;font-size:8.4px;line-height:10.92px;color:#9db3c9;">-</span>
<span style="left:478.17px;transform-origin:100% 50%;top:495.74px;font-size:8.4px;line-height:10.92px;color:#9db3c9;">-</span>
<span style="left:533.44px;transform-origin:100% 50%;top:495.74px;font-size:8.4px;line-height:10.92px;color:#9db3c9;">-</span>
<span style="left:588.71px;transform-origin:100% 50%;top:495.74px;font-size:8.4px;line-height:10.92px;color:#9db3c9;">-</span>
<span style="left:643.98px;transform-origin:100% 50%;top:495.74px;font-size:8.4px;line-height:10.92px;color:#9db3c9;">-</span>
<span style="left:699.25px;transform-origin:100% 50%;top:495.74px;font-size:8.4px;line-height:10.92px;color:#9db3c9;">-</span>
<span style="left:754.52px;transform-origin:100% 50%;top:495.74px;font-size:8.4px;line-height:10.92px;color:#9db3c9;">-</span>
<span style="left:809.79px;transform-origin:100% 50%;top:495.74px;font-size:8.4px;line-height:10.92px;color:#9db3c9;">-</span>
<span style="left:865.06px;transform-origin:100% 50%;top:495.74px;font-size:8.4px;line-height:10.92px;color:#9db3c9;">-</span>
<span style="left:920.33px;transform-origin:100% 50%;top:495.74px;font-size:8.4px;line-height:10.92px;color:#9db3c9;">-</span>
<span style="left:964.98px;transform-origin:100% 50%;top:495.74px;font-size:8.4px;line-height:10.92px;color:#3b7cba;">400</span>
<span style="left:44.20px;transform-origin:0 50%;top:508.24px;font-size:8.4px;line-height:10.92px;color:#3b7cba;transform:scaleX(1.0306);">Automation Cost</span>
<span style="left:310.00px;transform-origin:100% 50%;top:508.24px;font-size:8.4px;line-height:10.92px;color:#9db3c9;">-</span>
<span style="left:367.60px;transform-origin:100% 50%;top:508.24px;font-size:8.4px;line-height:10.92px;color:#9db3c9;">-</span>
<span style="left:422.90px;transform-origin:100% 50%;top:508.24px;font-size:8.4px;line-height:10.92px;color:#9db3c9;">-</span>
<span style="left:478.17px;transform-origin:100% 50%;top:508.24px;font-size:8.4px;line-height:10.92px;color:#9db3c9;">-</span>
<span style="left:533.44px;transform-origin:100% 50%;top:508.24px;font-size:8.4px;line-height:10.92px;color:#9db3c9;">-</span>
<span style="left:588.71px;transform-origin:100% 50%;top:508.24px;font-size:8.4px;line-height:10.92px;color:#9db3c9;">-</span>
<span style="left:643.98px;transform-origin:100% 50%;top:508.24px;font-size:8.4px;line-height:10.92px;color:#9db3c9;">-</span>
<span style="left:699.25px;transform-origin:100% 50%;top:508.24px;font-size:8.4px;line-height:10.92px;color:#9db3c9;">-</span>
<span style="left:754.52px;transform-origin:100% 50%;top:508.24px;font-size:8.4px;line-height:10.92px;color:#9db3c9;">-</span>
<span style="left:809.79px;transform-origin:100% 50%;top:508.24px;font-size:8.4px;line-height:10.92px;color:#9db3c9;">-</span>
<span style="left:865.06px;transform-origin:100% 50%;top:508.24px;font-size:8.4px;line-height:10.92px;color:#9db3c9;">-</span>
<span style="left:920.33px;transform-origin:100% 50%;top:508.24px;font-size:8.4px;line-height:10.92px;color:#9db3c9;">-</span>
<span style="left:975.60px;transform-origin:100% 50%;top:508.24px;font-size:8.4px;line-height:10.92px;color:#9db3c9;">-</span>
<span style="left:32.00px;transform-origin:0 50%;top:520.74px;font-size:8.4px;line-height:10.92px;color:#363636;font-weight:700;transform:scaleX(0.9876);">Total</span>
<span style="left:287.41px;transform-origin:100% 50%;top:520.74px;font-size:8.4px;line-height:10.92px;color:#3b7cba;">47,200</span>
<span style="left:345.61px;transform-origin:100% 50%;top:520.74px;font-size:8.4px;line-height:10.92px;color:#3b7cba;">47,200</span>
<span style="left:422.90px;transform-origin:100% 50%;top:520.74px;font-size:8.4px;line-height:10.92px;color:#9db3c9;">-</span>
<span style="left:478.17px;transform-origin:100% 50%;top:520.74px;font-size:8.4px;line-height:10.92px;color:#9db3c9;">-</span>
<span style="left:533.44px;transform-origin:100% 50%;top:520.74px;font-size:8.4px;line-height:10.92px;color:#9db3c9;">-</span>
<span style="left:588.71px;transform-origin:100% 50%;top:520.74px;font-size:8.4px;line-height:10.92px;color:#9db3c9;">-</span>
<span style="left:643.98px;transform-origin:100% 50%;top:520.74px;font-size:8.4px;line-height:10.92px;color:#9db3c9;">-</span>
<span style="left:699.25px;transform-origin:100% 50%;top:520.74px;font-size:8.4px;line-height:10.92px;color:#9db3c9;">-</span>
<span style="left:754.52px;transform-origin:100% 50%;top:520.74px;font-size:8.4px;line-height:10.92px;color:#9db3c9;">-</span>
<span style="left:809.79px;transform-origin:100% 50%;top:520.74px;font-size:8.4px;line-height:10.92px;color:#9db3c9;">-</span>
<span style="left:865.06px;transform-origin:100% 50%;top:520.74px;font-size:8.4px;line-height:10.92px;color:#9db3c9;">-</span>
<span style="left:920.33px;transform-origin:100% 50%;top:520.74px;font-size:8.4px;line-height:10.92px;color:#9db3c9;">-</span>
<span style="left:953.31px;transform-origin:100% 50%;top:520.74px;font-size:8.4px;line-height:10.92px;color:#3b7cba;">94,400</span>
<span style="left:32.00px;transform-origin:0 50%;top:254.04px;font-size:8.4px;line-height:10.92px;color:#000;font-weight:700;transform:scaleX(0.9896);">Source Development &amp;</span>
<span style="left:32.00px;transform-origin:0 50%;top:266.34px;font-size:8.4px;line-height:10.92px;color:#000;font-weight:700;transform:scaleX(0.9525);">Capping</span>
<span style="left:38.40px;transform-origin:0 50%;top:353.94px;font-size:8.4px;line-height:10.92px;color:#000;font-weight:700;transform:scaleX(0.9801);">Water Pipelines</span>
<span style="left:32.00px;transform-origin:0 50%;top:443.64px;font-size:8.4px;line-height:10.92px;color:#000;font-weight:700;">Water Purification &amp;</span>
<span style="left:32.00px;transform-origin:0 50%;top:456.04px;font-size:8.4px;line-height:10.92px;color:#000;font-weight:700;transform:scaleX(0.9950);">Treatment System</span>
<span style="left:32.00px;transform-origin:0 50%;top:546.04px;font-size:8.4px;line-height:10.92px;color:#000;font-weight:700;transform:scaleX(0.9524);">High-Speed Bottling Lines</span>
<div style="left:987.50px;top:51.20px;width:12.50px;height:508.00px;background:#f3f3f3;"></div>
<div style="left:987.00px;top:51.20px;width:1.00px;height:508.00px;background:#e2e2e2;"></div>
<div style="left:991.20px;top:62.80px;width:5.70px;height:155.60px;background:#6e6e6e;border-radius:2px;"></div>
<svg style="left:990.9px;top:54px" width="7" height="6" viewBox="0 0 7 6"><path d="M1 4.4 L3.5 0.8 L6 4.4 Z" fill="#6a6a6a"/></svg>
<svg style="left:990.8px;top:552px" width="7" height="6" viewBox="0 0 7 6"><path d="M0.4 1 L3.5 5.2 L6.6 1 Z" fill="#555"/></svg>
<div style="left:0.00px;top:558.60px;width:1000.00px;height:20.40px;background:#e6e9ee;"></div>
<div style="left:75.00px;top:561.00px;width:91.00px;height:16.30px;background:#fdfdc9;"></div>
<span style="left:80.00px;transform-origin:0 50%;top:564.62px;font-size:9.2px;line-height:11.96px;color:#262626;transform:scaleX(0.9597);">Product Sales 35-39</span>
<div style="left:172.00px;top:561.00px;width:92.00px;height:16.30px;background:#fdfdc9;"></div>
<span style="left:178.40px;transform-origin:0 50%;top:564.62px;font-size:9.2px;line-height:11.96px;color:#262626;transform:scaleX(0.9597);">Product Sales 40-44</span>
<div style="left:271.00px;top:561.00px;width:70.00px;height:16.30px;background:#fdfdc9;"></div>
<span style="left:277.40px;transform-origin:0 50%;top:564.62px;font-size:9.2px;line-height:11.96px;color:#262626;transform:scaleX(0.9709);">2025 Accounts</span>
<div style="left:346.00px;top:561.00px;width:102.00px;height:16.30px;background:#e8ebf1;"></div>
<span style="left:353.60px;transform-origin:0 50%;top:564.62px;font-size:9.2px;line-height:11.96px;color:#262626;transform:scaleX(0.9657);">2025 MRR Dashboard</span>
<div style="left:453.60px;top:561.00px;width:41.40px;height:16.30px;background:#fdfdc9;"></div>
<span style="left:460.00px;transform-origin:0 50%;top:564.62px;font-size:9.2px;line-height:11.96px;color:#262626;transform:scaleX(0.9144);">IS 2025</span>
<div style="left:500.60px;top:561.00px;width:43.40px;height:16.30px;background:#fdfdc9;"></div>
<span style="left:506.00px;transform-origin:0 50%;top:564.62px;font-size:9.2px;line-height:11.96px;color:#262626;transform:scaleX(0.8785);">CF 2025</span>
<span style="left:555.60px;transform-origin:0 50%;top:564.62px;font-size:9.2px;line-height:11.96px;color:#262626;transform:scaleX(0.9066);">BS 2025</span>
<span style="left:606.00px;transform-origin:0 50%;top:564.62px;font-size:9.2px;line-height:11.96px;color:#262626;transform:scaleX(0.9652);">Statements Summary 2025</span>
<div style="left:727.00px;top:558.00px;width:59.50px;height:19.00px;background:#fff;"></div>
<span style="left:731.60px;transform-origin:0 50%;top:562.82px;font-size:9.2px;line-height:11.96px;color:#222;font-weight:700;transform:scaleX(0.9137);">CAPEX 2025</span>
<div style="left:731.20px;top:574.00px;width:50.80px;height:1.30px;background:#217346;"></div>
<div style="left:792.00px;top:561.00px;width:55.00px;height:16.30px;background:#fdfdc9;"></div>
<span style="left:798.60px;transform-origin:0 50%;top:564.62px;font-size:9.2px;line-height:11.96px;color:#262626;transform:scaleX(0.8994);">OPEX2025</span>
<div style="left:851.00px;top:561.00px;width:29.00px;height:16.30px;background:#fdfdc9;"></div>
<span style="left:858.00px;transform-origin:0 50%;top:564.62px;font-size:9.2px;line-height:11.96px;color:#262626;transform:scaleX(0.9283);">2026</span>
<svg style="left:14px;top:563px" width="52" height="12" viewBox="0 0 52 12"><g fill="none" stroke="#8e8e8e" stroke-width="1.0"><path d="M6.4 3.2 L3.6 6.3 L6.4 9.4"/><path d="M24.6 3.2 L27.4 6.3 L24.6 9.4"/></g><g fill="#444"><circle cx="44" cy="6.4" r="0.9"/><circle cx="46.6" cy="6.4" r="0.9"/><circle cx="49.2" cy="6.4" r="0.9"/></g></svg>
<svg style="left:884px;top:562px" width="112" height="14" viewBox="0 0 112 14"><g fill="#444"><circle cx="3.2" cy="7.4" r="0.9"/><circle cx="5.8" cy="7.4" r="0.9"/><circle cx="8.4" cy="7.4" r="0.9"/><circle cx="48" cy="3.6" r="0.9"/><circle cx="48" cy="7" r="0.9"/><circle cx="48" cy="10.4" r="0.9"/></g><path d="M23 7 H31 M27 3 V11" stroke="#555" stroke-width="1.1" fill="none"/><path d="M67 4.4 L63.4 7.2 L67 10 Z" fill="#555"/><path d="M97 4.4 L100.6 7.2 L97 10 Z" fill="#555"/><rect x="69.6" y="4.5" width="22" height="5.5" rx="2.7" fill="#666"/></svg>
<div style="left:0.00px;top:579.30px;width:1000.00px;height:14.70px;background:#f3f3f3;"></div>
<span style="left:7.60px;transform-origin:0 50%;top:583.32px;font-size:7.2px;line-height:9.36px;color:#444;transform:scaleX(0.8841);">Ready</span>
<span style="left:72.40px;transform-origin:0 50%;top:583.32px;font-size:7.2px;line-height:9.36px;color:#222;font-weight:700;transform:scaleX(0.9136);">Accessibility: Investigate</span>
<svg style="left:39.8px;top:582.8px" width="10" height="9" viewBox="0 0 10 9"><rect x="0.5" y="0.5" width="8.8" height="7.6" fill="#f3f3f3" stroke="#4a4a4a" stroke-width="1"/><rect x="0.5" y="0.5" width="8.8" height="1.8" fill="#777"/><path d="M1.4 4.2 H3.4" stroke="#888" stroke-width="0.7"/><circle cx="6.2" cy="5.6" r="2.3" fill="#fafafa" stroke="#444" stroke-width="0.9"/><circle cx="6.2" cy="5.6" r="1.1" fill="#222"/></svg>
<svg style="left:60.4px;top:582.3px" width="10" height="10" viewBox="0 0 10 10"><circle cx="4" cy="1.4" r="1" fill="#444"/><g fill="none" stroke="#444" stroke-width="1.05"><path d="M0.3 3.1 H7.7 M4 3.1 V6.3 M4 6.3 L1.9 9.5 M4 6.3 L5.2 8"/><path d="M5.7 7.5 L7.1 9.1 L9.6 6.1" stroke-width="0.95"/></g></svg>
<div style="left:807.50px;top:579.80px;width:24.00px;height:14.20px;background:#e1e1e1;"></div>
<svg style="left:813.5px;top:581.5px" width="11" height="11" viewBox="0 0 11 11"><g fill="none" stroke="#444" stroke-width="0.9"><rect x="0.6" y="0.6" width="9.8" height="9.8"/><path d="M0.6 3.9 H10.4 M0.6 7.1 H10.4 M3.9 0.6 V10.4 M7.1 0.6 V10.4"/></g></svg>
<svg style="left:839.5px;top:581.5px" width="11" height="11" viewBox="0 0 11 11"><g fill="none" stroke="#555" stroke-width="0.9"><rect x="0.6" y="0.6" width="9.8" height="9.8"/><path d="M0.6 2.6 H10.4 M2.6 2.6 V10.4 M4.6 2.6 V10.4 M6.5 2.6 V10.4 M8.4 2.6 V10.4"/></g></svg>
<svg style="left:866px;top:581.5px" width="11" height="11" viewBox="0 0 11 11"><g fill="none" stroke="#555" stroke-width="0.9"><rect x="0.6" y="0.6" width="9.8" height="9.8"/><path d="M3.4 0.6 V5 H7.4 V0.6"/></g></svg>
<div style="left:888.00px;top:587.00px;width:5.00px;height:0.90px;background:#9c9c9c;"></div>
<div style="left:896.40px;top:587.00px;width:63.60px;height:0.90px;background:#777;"></div>
<div style="left:927.60px;top:583.00px;width:2.40px;height:9.00px;background:#444;"></div>
<div style="left:964.50px;top:587.00px;width:5.00px;height:0.90px;background:#a5a5a5;"></div>
<div style="left:966.60px;top:584.90px;width:0.90px;height:5.00px;background:#a5a5a5;"></div>
<span style="left:978.00px;transform-origin:0 50%;top:583.45px;font-size:7px;line-height:9.10px;color:#555;transform:scaleX(0.8769);">100%</span>
</div></body></html>
